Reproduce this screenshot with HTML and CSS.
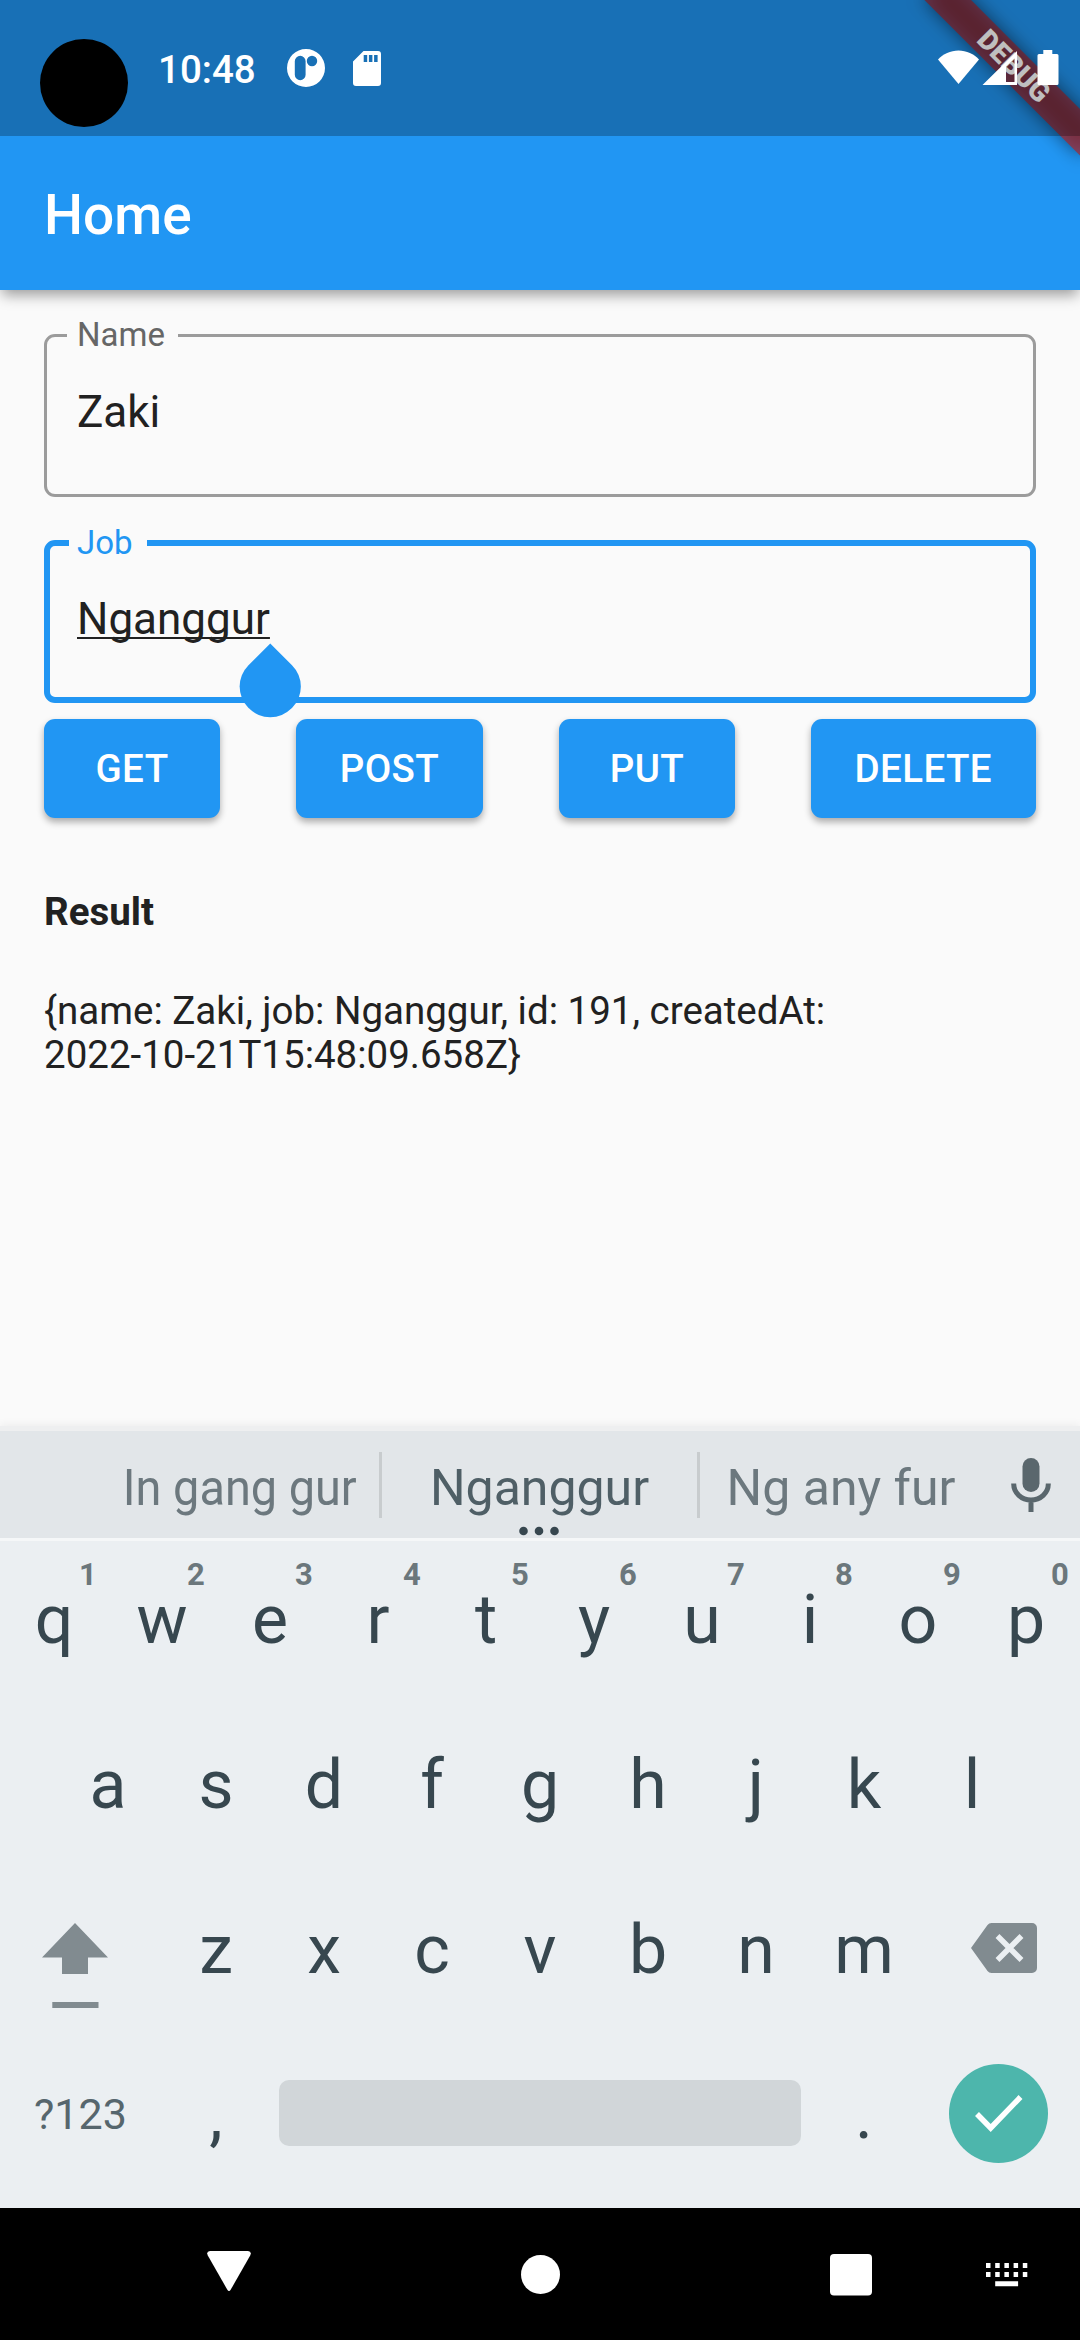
FILE: index.html
```html
<!DOCTYPE html>
<html lang="en">
<head>
<meta charset="utf-8">
<title>Home</title>
<link rel="stylesheet" href="styles.css">
</head>
<body>
<div class="screen">
  <header class="top">
    <div class="banner-clip"><div class="banner">DEBUG</div></div>
    <div class="status">
      <span class="camera"></span>
      <span class="time">10:48</span>
      <svg class="ic-p" width="38" height="38" viewBox="0 0 38 38"><path fill="#fff" fill-rule="evenodd" d="M19 0a19 19 0 1 0 0 38a19 19 0 1 0 0-38zM13.2 6.8a5.4 5.4 0 0 1 5.4 5.4v13.6a5.4 5.4 0 0 1-10.8 0V12.2a5.4 5.4 0 0 1 5.4-5.4zM25 6.8a5.2 5.2 0 1 1 0 10.4a5.2 5.2 0 1 1 0-10.4z"/></svg>
      <svg class="ic-sd" width="28" height="35" viewBox="0 0 28 35"><path fill="#fff" fill-rule="evenodd" d="M10.500 0H25a3 3 0 0 1 3 3v29a3 3 0 0 1-3 3H3a3 3 0 0 1-3-3V10.500zM10.700 4v7h3.500V4zM15.900 4v7h3.500V4zM21.100 4v7h3.500V4z"/></svg>
      <svg class="ic-net" width="122" height="36" viewBox="0 0 122 36"><path fill="#fff" d="M0 9.500C5 4 12.500.500 20.500.500S36 4 41 9.500L20.500 34z"/><path fill="#fff" fill-rule="evenodd" d="M44.500 35L79 1v34zM68 16.500V32h8.500V8.200z"/><path fill="#fff" d="M105.300 0h9v4H119a1.500 1.500 0 0 1 1.500 1.500v28A1.500 1.500 0 0 1 119 35h-18a1.500 1.500 0 0 1-1.500-1.500v-28A1.500 1.500 0 0 1 101 4h4.300z"/></svg>
    </div>
    <h1 class="title">Home</h1>
  </header>

  <main class="content">
    <div class="field"><span class="label">Name</span><span class="value">Zaki</span></div>
    <div class="field focused"><span class="label">Job</span><span class="value composing">Nganggur</span><span class="handle"></span></div>
    <div class="buttons">
      <button>GET</button><button>POST</button><button>PUT</button><button>DELETE</button>
    </div>
    <h2 class="result-title">Result</h2>
    <p class="result">{name: Zaki, job: Nganggur, id: 191, createdAt:<br>2022-10-21T15:48:09.658Z}</p>
  </main>

  <section class="keyboard">
    <div class="suggestions">
      <span class="word first"><span class="condensed">In gang gur</span></span>
      <span class="word main">Nganggur<svg class="dots" width="42" height="10" viewBox="0 0 42 10"><circle cx="5.500" cy="5" r="4.300"/><circle cx="21" cy="5" r="4.300"/><circle cx="36.500" cy="5" r="4.300"/></svg></span>
      <span class="word last">Ng any fur</span>
      <svg class="mic" width="40" height="54" viewBox="0 0 40 54"><rect x="11.500" y="0" width="17" height="34" rx="8.500" fill="#5a676d"/><path d="M2.700 25.500v.500a17.300 16 0 0 0 34.600 0v-.500M20 42v12" fill="none" stroke="#5a676d" stroke-width="5"/></svg>
    </div>
    <div class="row">
      <span class="key">q<i>1</i></span><span class="key">w<i>2</i></span><span class="key">e<i>3</i></span><span class="key">r<i>4</i></span><span class="key">t<i>5</i></span><span class="key">y<i>6</i></span><span class="key">u<i>7</i></span><span class="key">i<i>8</i></span><span class="key">o<i>9</i></span><span class="key">p<i>0</i></span>
    </div>
    <div class="row">
      <span class="key">a</span><span class="key">s</span><span class="key">d</span><span class="key">f</span><span class="key">g</span><span class="key">h</span><span class="key">j</span><span class="key">k</span><span class="key">l</span>
    </div>
    <div class="row">
      <span class="side shift"><svg width="66" height="86" viewBox="0 0 66 86"><path fill="#818b90" d="M33 0l33 34.500H46V51H20V34.500H0zM10.300 79h46.200v6H10.300z"/></svg></span>
      <span class="key">z</span><span class="key">x</span><span class="key">c</span><span class="key">v</span><span class="key">b</span><span class="key">n</span><span class="key">m</span>
      <span class="side erase"><svg width="66" height="50" viewBox="0 0 66 50"><path fill="#818b90" d="M20.500 0H61a5 5 0 0 1 5 5v40a5 5 0 0 1-5 5H20.500a5 5 0 0 1-4-2L0 25 16.500 2a5 5 0 0 1 4-2z"/><path d="M26.500 13l24 24M50.500 13l-24 24" stroke="#ebeff2" stroke-width="5.500" fill="none"/></svg></span>
    </div>
    <div class="row">
      <span class="side symbols">?123</span>
      <span class="key">,</span>
      <span class="space"></span>
      <span class="key">.</span>
      <span class="side enter"><svg width="99" height="99" viewBox="0 0 99 99"><circle cx="49.500" cy="49.500" r="49.500" fill="#4db6ac"/><path d="M28 50l13.700 14L71.500 33" fill="none" stroke="#fff" stroke-width="5.500"/></svg></span>
    </div>
  </section>

  <nav class="nav">
    <svg class="back" width="44" height="41" viewBox="0 0 44 41"><path fill="#fff" d="M3 0h38q4 .500 2.200 4.500L23.800 38.500q-1.800 3-3.600 0L.800 4.500Q-1 .500 3 0z"/></svg>
    <svg class="home" width="39" height="39" viewBox="0 0 39 39"><circle cx="19.500" cy="19.500" r="19.500" fill="#fff"/></svg>
    <svg class="recent" width="42" height="42" viewBox="0 0 42 42"><rect width="42" height="41.500" rx="4" fill="#fff"/></svg>
    <svg class="ime" width="42" height="24" viewBox="0 0 42 24"><path fill="#fff" d="M0 0h4.500v5H0zM9.200 0h4.500v5H9.200zM18.400 0h4.500v5h-4.500zM27.600 0h4.500v5h-4.500zM36.800 0h4.500v5h-4.500zM0 9h4.500v5H0zM9.200 9h4.500v5H9.200zM18.400 9h4.500v5h-4.500zM27.600 9h4.500v5h-4.500zM36.800 9h4.500v5h-4.500zM9.200 18.300h22.900v5H9.200z"/></svg>
  </nav>
</div>
</body>
</html>
```

FILE: styles.css
```css
* { box-sizing: border-box; }
body { margin: 0; background: #fafafa; font-family: Roboto, sans-serif; }
svg { display: block; flex: none; }
.screen { display: flex; flex-direction: column; width: 1080px; height: 2340px; overflow: hidden; }

.top { position: relative; z-index: 1; height: 290px; flex: none; background: #2196f3; color: #fff; box-shadow: 0 7px 13px -2px rgba(0,0,0,.38); }
.banner-clip { position: absolute; inset: 0; overflow: hidden; }
.banner { position: absolute; left: 970px; top: 77px; width: 220px; height: 33px; transform-origin: 110px -77px; transform: rotate(45deg); font-size: 28px; font-weight: 900; line-height: 33px; text-align: center; }
.banner::before, .banner::after { content: ""; position: absolute; inset: 0; z-index: -1; }
.banner::before { background: rgba(0,0,0,.5); filter: blur(9px); }
.banner::after { background: rgba(183,28,28,.627); }
.status { position: relative; display: flex; align-items: flex-start; height: 136px; background: rgba(0,0,0,.25); }
.camera { width: 88px; height: 88px; margin: 39px 0 0 40px; border-radius: 50%; background: #000; }
.time { width: 98px; margin: 47px 0 0 30px; font-size: 38.5px; font-weight: 500; line-height: 45px; white-space: nowrap; }
.ic-p { margin: 49px 0 0 30.5px; }
.ic-sd { margin: 51px 0 0 28px; }
.ic-net { margin: 50px 20px 0 auto; }
.title { margin: 0; padding: 47px 44px 0; font-size: 55px; font-weight: 500; line-height: 64px; }

.content { height: 1136px; flex: none; padding: 44px 44px 0; color: #212121; }
.field { position: relative; height: 162.5px; margin-bottom: 43.5px; padding: 49px 0 0 30px; border: 3px solid #9b9b9b; border-radius: 11px; }
.label { position: absolute; left: 20px; top: -22.5px; padding: 0 13px 0 10px; background: #fafafa; color: #666; font-size: 33px; line-height: 40px; }
.value { display: block; font-size: 44px; line-height: 52px; }
.focused { border: 6px solid #2196f3; margin-bottom: 16.5px; padding: 47px 0 0 27px; }
.focused .label { left: 19px; top: -23px; padding-left: 8px; padding-right: 14px; color: #2196f3; }
.composing { text-decoration: underline; text-decoration-thickness: 2px; text-underline-offset: 3px; text-decoration-skip-ink: none; }
.handle { position: absolute; left: 189.75px; top: 109.5px; width: 60.5px; height: 60.5px; border-radius: 0 50% 50% 50%; background: #2196f3; transform: rotate(45deg); }
.buttons { display: flex; justify-content: space-between; height: 99px; }
.buttons button { min-width: 176px; padding: 0 44px; border: 0; border-radius: 11px; background: #2196f3; color: #fff; font: 500 38.5px/99px Roboto, sans-serif; letter-spacing: .4px; box-shadow: 0 4px 7px rgba(0,0,0,.32); }
.result-title { margin: 71px 0 0; font-size: 38.5px; line-height: 45px; font-weight: 700; }
.result { margin: 55px 0 0; font-size: 38.5px; line-height: 44px; }

.keyboard { position: relative; height: 782px; flex: none; background: #ebeff2; border-top: 5px solid #eeeff0; box-shadow: 0 -2px 8px rgba(0,0,0,.05); color: #37474f; }
.suggestions { display: flex; height: 110px; background: #e2e6e9; border-bottom: 3px solid #f5f7f8; color: #6c787e; font-size: 50px; line-height: 115px; }
.word { position: relative; text-align: center; white-space: nowrap; }
.first { width: 379px; padding-left: 101px; }
.condensed { display: inline-block; transform: scaleX(.937); }
.main { width: 321px; color: #4f5f66; }
.main::before, .main::after { content: ""; position: absolute; top: 21px; width: 3px; height: 66px; background: #c8ccce; }
.main::before { left: 0; }
.main::after { right: 0; }
.dots { position: absolute; left: 139px; top: 94.5px; fill: #37474f; }
.last { width: 282px; }
.mic { margin: 27px 0 0 29px; }
.row { display: flex; justify-content: center; height: 165px; }
.key { position: relative; width: 108px; font-size: 68px; line-height: 158px; text-align: center; }
.key i { position: absolute; right: 0; top: 16px; width: 40px; color: #6b777c; font-size: 31px; font-style: normal; font-weight: 700; line-height: 36px; }
.side { width: 162px; }
.shift { padding: 52px 0 0 42px; }
.erase { padding: 52px 0 0 53px; }
.symbols { padding-left: 34px; color: #56666d; font-size: 43px; line-height: 156px; }
.space { width: 522px; height: 66px; margin: 44px 9px 0; border-radius: 10px; background: #d1d6d9; }
.enter { padding: 28px 0 0 31px; }

.nav { display: flex; align-items: flex-start; height: 132px; flex: none; background: #000; }
.back { margin: 43px 0 0 206.5px; }
.home { margin: 46.5px 0 0 270px; }
.recent { margin: 46px 0 0 270px; }
.ime { margin: 55px 0 0 114.5px; }
```
